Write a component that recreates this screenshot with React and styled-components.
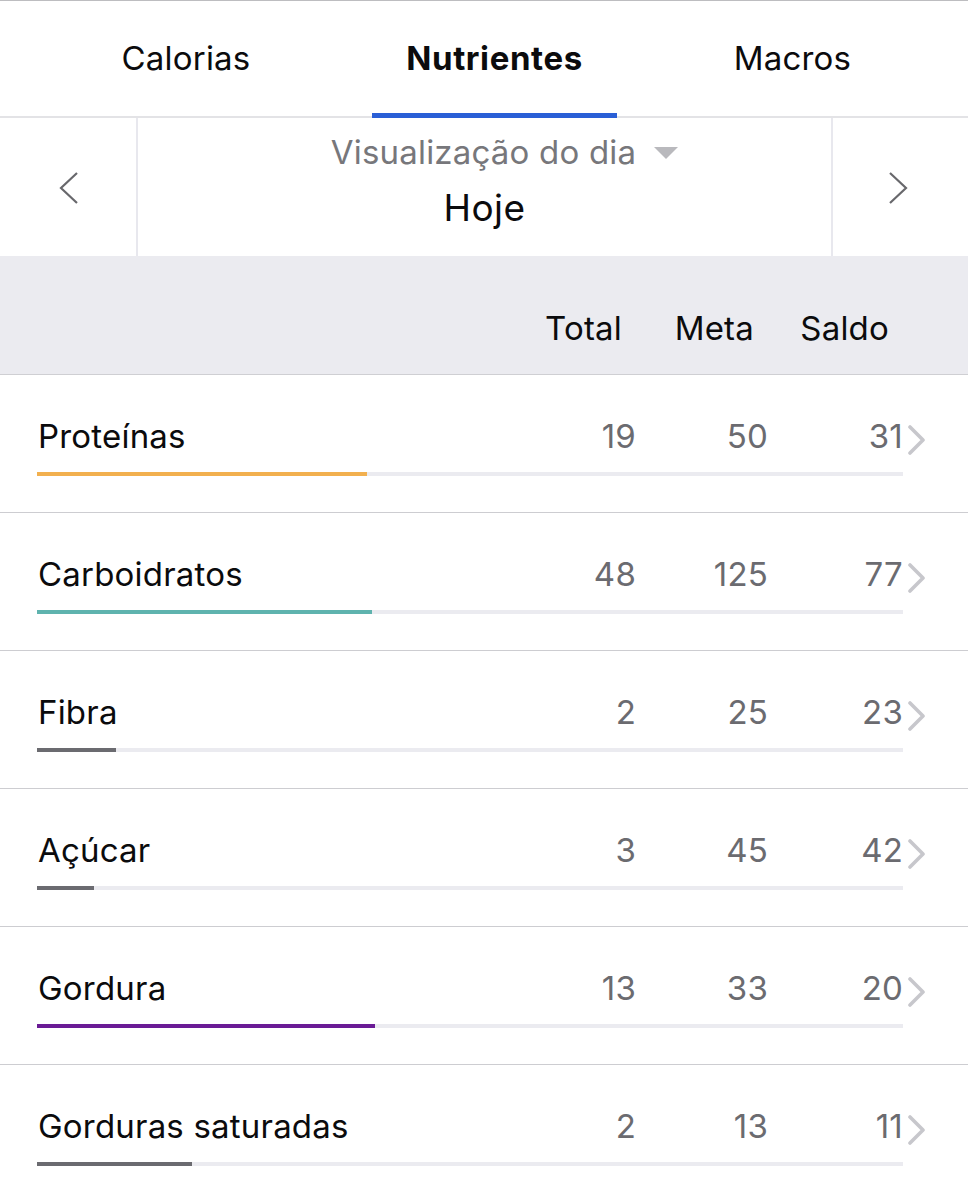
import React from "react";
import styled, { createGlobalStyle } from "styled-components";

const Global = createGlobalStyle`
  html, body { margin: 0; padding: 0; background: #fff; }
  body { font-family: Inter, "Liberation Sans", sans-serif; -webkit-font-smoothing: antialiased; }
`;

const Page = styled.div`
  width: 968px;
  height: 1200px;
  overflow: hidden;
  background: #fff;
  border-top: 1px solid #bdbdc0;
  box-sizing: border-box;
`;

const Tabs = styled.div`
  display: flex;
  height: 115px;
  border-bottom: 2px solid #e3e3e6;
  box-sizing: content-box;
`;

const Tab = styled.div`
  width: ${p => p.$w}px;
  display: flex;
  align-items: center;
  justify-content: center;
  position: relative;
  font-size: 33px;
  letter-spacing: ${p => (p.$active ? "0.6px" : "0.2px")};
  font-weight: ${p => (p.$active ? 700 : 400)};
  color: #0b0b0d;
  padding-bottom: 2px;
  box-sizing: border-box;
  &::after {
    content: "";
    display: ${p => (p.$active ? "block" : "none")};
    position: absolute;
    left: 0;
    right: 0;
    bottom: -2px;
    height: 5px;
    background: #2a5fd6;
  }
`;

const Nav = styled.div`
  display: grid;
  grid-template-columns: 138px 1fr 137px;
  height: 138px;
`;

const NavButton = styled.div`
  display: flex;
  align-items: center;
  justify-content: flex-start;
  border-${p => p.$side}: 2px solid #e8e8ee;
  padding-top: 2px;
  padding-left: ${p => p.$pad}px;
`;

const NavCenter = styled.div`
  display: flex;
  flex-direction: column;
  align-items: center;
  justify-content: center;
  gap: 17px;
  padding-bottom: 14px;
`;

const ViewLabel = styled.div`
  display: flex;
  align-items: center;
  gap: 18px;
  font-size: 33px;
  letter-spacing: 0.2px;
  color: #77777b;
  line-height: 38px;
  padding-left: 40px;
`;

const Triangle = styled.span`
  width: 0;
  height: 0;
  border-left: 12px solid transparent;
  border-right: 12px solid transparent;
  border-top: 12px solid #b9b9bd;
  margin-top: 2px;
`;

const DayLabel = styled.div`
  font-size: 37px;
  letter-spacing: 0.4px;
  color: #0b0b0d;
  line-height: 40px;
`;

const cols = `1fr 132px 132px 135px 23px`;

const Header = styled.div`
  display: grid;
  grid-template-columns: ${cols};
  align-items: center;
  background: #ebebf0;
  border-bottom: 1px solid #cfcfd3;
  padding: 0 42px 0 37px;
  box-sizing: border-box;
  height: 119px;
`;

const HeadCell = styled.div`
  text-align: right;
  font-size: 33px;
  letter-spacing: 0.2px;
  color: #0b0b0d;
  padding-right: 14px;
  padding-top: 26px;
  grid-column: ${p => p.$col};
`;

const Row = styled.div`
  display: grid;
  grid-template-columns: ${cols};
  grid-template-rows: 38px 4px;
  row-gap: 17px;
  padding: 42px 42px 36px 37px;
  border-bottom: 1px solid #cdcdd1;
`;

const Label = styled.div`
  font-size: 33px;
  letter-spacing: 0.2px;
  line-height: 38px;
  color: #0b0b0d;
  padding-left: 1px;
  white-space: nowrap;
`;

const Num = styled.div`
  font-size: 33px;
  letter-spacing: 0.2px;
  line-height: 38px;
  color: #6b6b70;
  text-align: right;
`;

const Chevron = styled.div`
  display: flex;
  align-items: center;
  justify-content: flex-end;
  padding-top: 8px;
`;

const Track = styled.div`
  grid-column: 1 / 5;
  height: 4px;
  background: #ebebf0;
`;

const Fill = styled.div`
  height: 100%;
  background: ${p => p.$color};
`;

const ChevLeft = () => (
  <svg width="20" height="32" viewBox="0 0 20 32">
    <polyline points="18,1 2,16 18,31" fill="none" stroke="#68686c" strokeWidth="2.2" />
  </svg>
);
const ChevRight = () => (
  <svg width="20" height="32" viewBox="0 0 20 32">
    <polyline points="2,1 18,16 2,31" fill="none" stroke="#68686c" strokeWidth="2.2" />
  </svg>
);
const RowChev = () => (
  <svg width="19" height="30" viewBox="0 0 19 30">
    <polyline points="3,2 16,15 3,28" fill="none" stroke="#c7c7cc" strokeWidth="3.6" strokeLinecap="round" strokeLinejoin="round" />
  </svg>
);

const data = [
  { name: "Proteínas", total: 19, meta: 50, saldo: 31, color: "#f2b04f", w: 330 },
  { name: "Carboidratos", total: 48, meta: 125, saldo: 77, color: "#5fb3ae", w: 335 },
  { name: "Fibra", total: 2, meta: 25, saldo: 23, color: "#6b6b70", w: 79 },
  { name: "Açúcar", total: 3, meta: 45, saldo: 42, color: "#6b6b70", w: 57 },
  { name: "Gordura", total: 13, meta: 33, saldo: 20, color: "#6a1b95", w: 338 },
  { name: "Gorduras saturadas", total: 2, meta: 13, saldo: 11, color: "#6b6b70", w: 155 },
];

export default function App() {
  return (
    <>
      <Global />
      <Page>
        <Tabs>
          <Tab $w={372}>Calorias</Tab>
          <Tab $w={245} $active>Nutrientes</Tab>
          <Tab $w={351}>Macros</Tab>
        </Tabs>
        <Nav>
          <NavButton $side="right" $pad={59}><ChevLeft /></NavButton>
          <NavCenter>
            <ViewLabel>Visualização do dia <Triangle /></ViewLabel>
            <DayLabel>Hoje</DayLabel>
          </NavCenter>
          <NavButton $side="left" $pad={55}><ChevRight /></NavButton>
        </Nav>
        <Header>
          <HeadCell $col={2}>Total</HeadCell>
          <HeadCell $col={3}>Meta</HeadCell>
          <HeadCell $col={4}>Saldo</HeadCell>
        </Header>
        {data.map(d => (
          <Row key={d.name}>
            <Label>{d.name}</Label>
            <Num>{d.total}</Num>
            <Num>{d.meta}</Num>
            <Num>{d.saldo}</Num>
            <Chevron><RowChev /></Chevron>
            <Track>
              <Fill $color={d.color} style={{ width: `${(d.w / 866) * 100}%` }} />
            </Track>
          </Row>
        ))}
      </Page>
    </>
  );
}
